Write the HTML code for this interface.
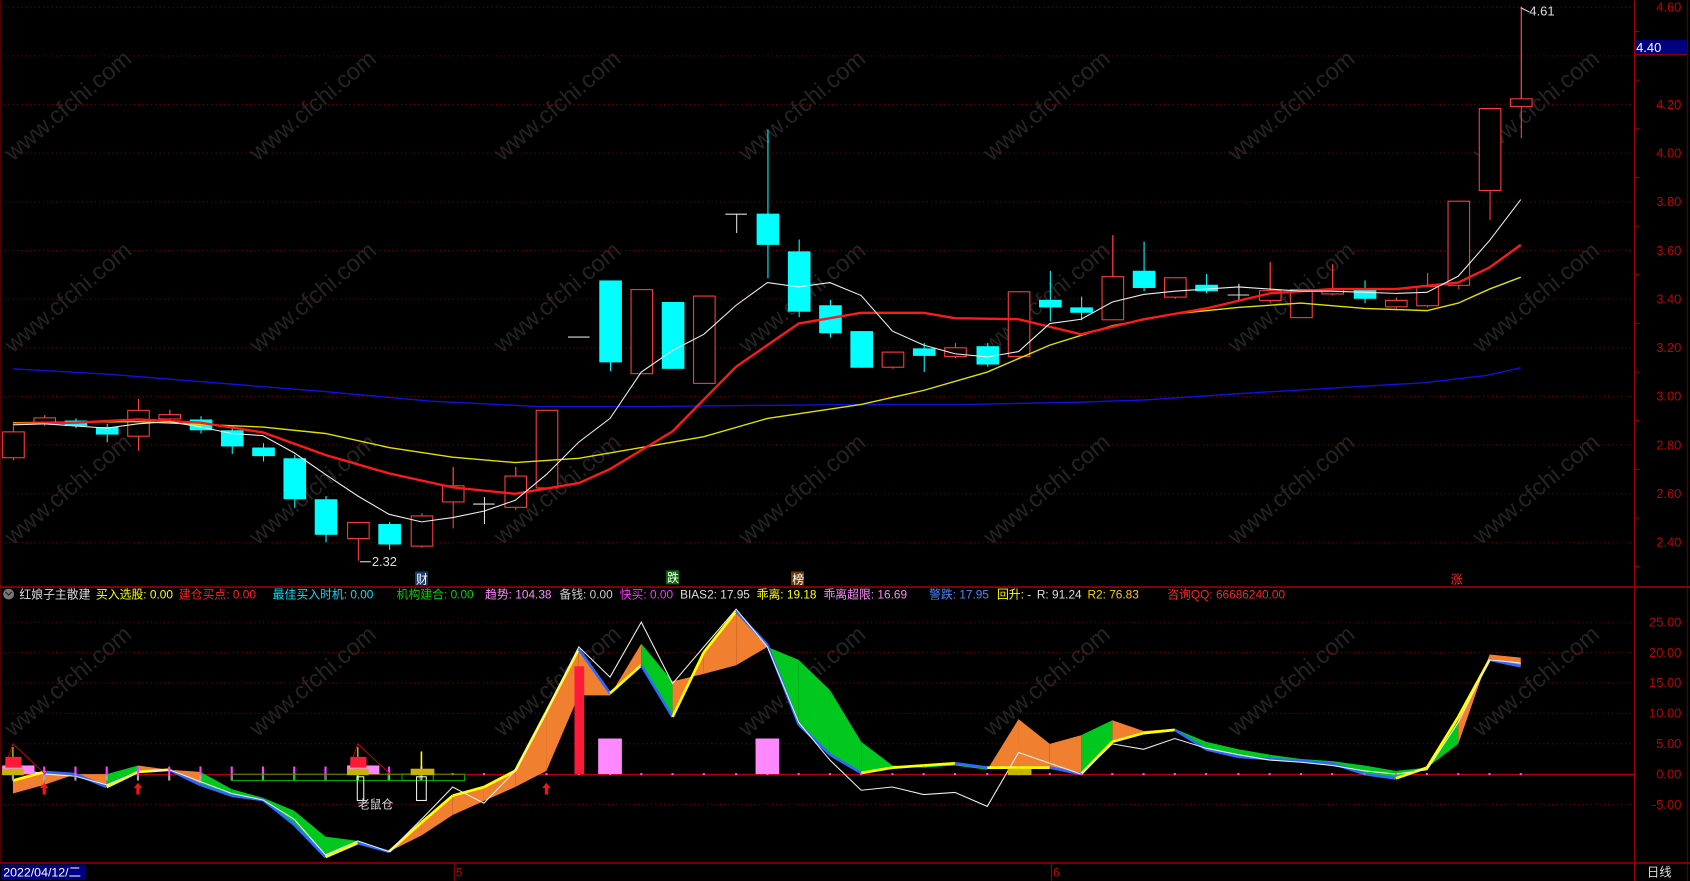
<!DOCTYPE html>
<html><head><meta charset="utf-8"><style>
html,body{margin:0;padding:0;background:#000;width:1690px;height:881px;overflow:hidden}
svg{display:block}
text{font-family:"Liberation Sans","Noto Sans CJK SC",sans-serif}
</style></head><body>
<svg id="s" width="1690" height="881" viewBox="0 0 1568 817" xmlns="http://www.w3.org/2000/svg" overflow="hidden">
<rect width="1568" height="817" fill="#000"/>
<g id="wm" fill="#242424" font-size="22"></g>
<g id="grid"></g>
<g id="main"></g>
<g id="low"></g>
<line x1="1516.5" y1="0" x2="1516.5" y2="817" stroke="#a00000"/>
<line x1="1565.5" y1="0" x2="1565.5" y2="817" stroke="#600000"/>
<line x1="0.5" y1="0" x2="0.5" y2="800" stroke="#500000"/>
<line x1="0" y1="544.5" x2="1568" y2="544.5" stroke="#a00000" stroke-width="1.5"/>
<line x1="0" y1="800.5" x2="1568" y2="800.5" stroke="#a00000" stroke-width="1.5"/>
<rect x="1517" y="37" width="48" height="13" fill="#000080"/>
<line x1="1517" y1="50.5" x2="1565" y2="50.5" stroke="#a00000"/>
<text x="1518" y="48" fill="#fff" font-size="12">4.40</text>
<text x="1419" y="14" fill="#ddd" font-size="12">4.61</text>
<path d="M1411 7 l8 4" stroke="#ddd" fill="none"/>
<text x="345" y="525" fill="#ddd" font-size="12">2.32</text>
<path d="M334 521 h10" stroke="#ddd"/>
<rect x="385" y="530" width="12" height="13" fill="#1a3a6a"/><text x="386" y="541" fill="#fff" font-size="11">财</text>
<rect x="618" y="529" width="12" height="13" fill="#0a6a0a"/><text x="619" y="540" fill="#fff" font-size="11">跌</text>
<rect x="734" y="530" width="12" height="13" fill="#6a3a0a"/><text x="735" y="541" fill="#fff" font-size="11">榜</text>
<text x="1346" y="541" fill="#ff3030" font-size="11">涨</text>
<g font-size="11">
<circle cx="8" cy="551" r="5" fill="#777"/><path d="M5 549 l3 3 l3 -3" stroke="#222" fill="none"/>
<text x="18" y="555" fill="#ddd">红娘子主散建</text>
<text x="89" y="555" fill="#ffff00">买入选股: 0.00</text>
<text x="166" y="555" fill="#ff2020">建仓买点: 0.00</text>
<text x="253" y="555" fill="#00e0ff">最佳买入时机: 0.00</text>
<text x="368" y="555" fill="#00d000">机构建合: 0.00</text>
<text x="450" y="555" fill="#ff88ff">趋势: 104.38</text>
<text x="519" y="555" fill="#ccc">备钱: 0.00</text>
<text x="575" y="555" fill="#ff30ff">快买: 0.00</text>
<text x="631" y="555" fill="#ddd">BIAS2: 17.95</text>
<text x="702" y="555" fill="#ffff00">乖离: 19.18</text>
<text x="764" y="555" fill="#ff88ff">乖离超限: 16.69</text>
<text x="862" y="555" fill="#4488ff">警跌: 17.95</text>
<text x="925" y="555" fill="#ffff00">回升: -</text>
<text x="962" y="555" fill="#ddd">R: 91.24</text>
<text x="1009" y="555" fill="#ffcc00">R2: 76.83</text>
<text x="1083" y="555" fill="#ff2020">咨询QQ: 66686240.00</text>
</g>
<rect x="1" y="802" width="79" height="14" fill="#000080"/>
<text x="3" y="813" fill="#fff" font-size="11.5">2022/04/12/二</text>
<line x1="421.5" y1="801" x2="421.5" y2="817" stroke="#a00000"/>
<text x="423" y="813" fill="#c00" font-size="11">5</text>
<line x1="975.5" y1="801" x2="975.5" y2="817" stroke="#a00000"/>
<text x="977" y="813" fill="#c00" font-size="11">6</text>
<text x="1528" y="813" fill="#ddd" font-size="11.5">日线</text>
<text x="332" y="750" fill="#ddd" font-size="11">老鼠仓</text>
</svg>
<script>
var NS="http://www.w3.org/2000/svg";
function el(p,t,a){var e=document.createElementNS(NS,t);for(var k in a)e.setAttribute(k,a[k]);p.appendChild(e);return e;}
var G=document.getElementById('grid'),M=document.getElementById('main'),L=document.getElementById('low'),W=document.getElementById('wm');
for(var j=0;j<4;j++)for(var i=0;i<7;i++){var x=12+227*i,y=150+178*j;var t=el(W,'text',{x:x,y:y,transform:'rotate(-40 '+x+' '+y+')'});t.textContent='www.cfchi.com';}
function py(p){return 6.5+(4.6-p)*225.7;}
for(var p=2.4;p<=4.61;p+=0.2){var y=py(p);el(G,'line',{x1:0,y1:y,x2:1516,y2:y,stroke:'#7a0000','stroke-dasharray':'1 3'});
if(Math.abs(p-4.4)>0.01){var t=el(G,'text',{x:1560,y:y+4,fill:'#c00000','font-size':12,'text-anchor':'end'});t.textContent=p.toFixed(2);}
if(y+22.5<544)el(G,'line',{x1:1516,y1:y+22.5,x2:1521,y2:y+22.5,stroke:'#a00000'});}
function vy(v){return 718-v*5.64;}
for(var v=-5;v<=25;v+=5){var y=vy(v);if(v!=0)el(G,'line',{x1:0,y1:y,x2:1516,y2:y,stroke:'#7a0000','stroke-dasharray':'1 3'});
var t=el(G,'text',{x:1560,y:y+4,fill:'#c00000','font-size':12,'text-anchor':'end'});t.textContent=v.toFixed(2);}
var C=[[12,400,424,395,427,'r'],[41,387,392,385,395,'r'],[70,390,395,388,397,'c'],[99,396,403,393,410,'c'],[128,380,404,370,418,'r'],[157,384,388,380,390,'r'],[186,389,399,386,402,'c'],[215,399,414,396,421,'c'],[244,415,423,411,428,'c'],[273,425,463,422,471,'c'],[302,463,496,460,503,'c'],[332,484,499,484,520,'r'],[361,486,505,484,510,'c'],[391,478,506,476,508,'r'],[420,450,465,433,490,'r'],[449,467,467,461,486,'w'],[478,441,470,433,473,'r'],[507,380,452,380,452,'r'],[537,312,312,312,312,'w'],[566,260,336,260,344,'c'],[595,268,346,268,346,'r'],[624,280,342,280,342,'c'],[653,274,355,274,355,'r'],[683,198,198,198,216,'w'],[712,198,227,120,258,'c'],[741,233,289,222,294,'c'],[770,283,309,278,313,'c'],[799,307,341,307,341,'c'],[828,326,340,326,342,'r'],[857,323,330,318,345,'c'],[886,322,330,318,332,'r'],[916,321,338,318,340,'c'],[945,270,330,270,332,'r'],[974,278,285,251,298,'c'],[1003,285,290,275,297,'c'],[1032,256,296,218,296,'r'],[1061,251,267,224,270,'c'],[1090,257,275,257,277,'r'],[1119,264,270,254,272,'c'],[1149,273,273,263,279,'w'],[1178,269,278,243,281,'r'],[1207,268,294,268,294,'r'],[1236,268,272,245,274,'r'],[1266,268,277,260,281,'c'],[1295,278,284,276,286,'r'],[1324,265,283,253,285,'r'],[1353,186,264,186,268,'r'],[1382,100,176,100,204,'r'],[1411,91,98,6,128,'r']];
C.forEach(function(c){var col=c[5]=='c'?'#00ffff':c[5]=='r'?'#ff3c3c':'#ddd';
el(M,'line',{x1:c[0]+.5,y1:c[3],x2:c[0]+.5,y2:c[4],stroke:col});
if(c[5]=='w'){el(M,'line',{x1:c[0]-10,y1:c[1]+.5,x2:c[0]+10,y2:c[1]+.5,stroke:col});}
else if(c[5]=='c'){el(M,'rect',{x:c[0]-10,y:c[1],width:21,height:Math.max(1,c[2]-c[1]),fill:col});}
else{el(M,'rect',{x:c[0]-9.5,y:c[1]+.5,width:20,height:Math.max(1,c[2]-c[1]),fill:'#000',stroke:col});el(M,'line',{x1:c[0]+.5,y1:c[3],x2:c[0]+.5,y2:c[1],stroke:col});}
});
function pl(p,pts,col,w){el(p,'polyline',{points:pts.map(function(a){return a.join(',')}).join(' '),fill:'none',stroke:col,'stroke-width':w});}
pl(M,[[12,342],[100,347],[200,355],[300,363],[400,372],[500,377],[600,377],[700,376],[800,375],[900,375],[1000,373],[1060,371],[1150,365],[1250,359],[1320,355],[1380,348],[1411,341]],'#1010e0',1.3);
pl(M,[[12,392],[128,391],[244,396],[302,402],[361,415],[420,424],[478,429],[537,425],[595,415],[653,405],[712,388],[799,375],[857,362],[916,345],[974,320],[1032,302],[1090,291],[1149,285],[1207,281],[1266,286],[1324,288],[1353,281],[1382,268],[1411,257]],'#e0e000',1.3);
pl(M,[[12,393],[70,392],[128,389],[186,392],[244,401],[302,422],[361,439],[420,452],[478,458],[537,448],[566,435],[624,400],[683,340],[741,300],[799,290],[857,290],[886,295],[945,296],[1003,310],[1061,296],[1119,286],[1178,272],[1236,268],[1295,268],[1353,262],[1382,248],[1411,227]],'#ff1a1a',2.2);
pl(M,[[12,394],[41,393],[70,395],[99,397],[128,393],[157,391],[186,396],[215,402],[244,404],[273,420],[302,440],[332,460],[361,477],[391,484],[420,480],[449,474],[478,464],[507,440],[537,410],[566,388],[595,345],[624,325],[653,310],[683,283],[712,262],[741,266],[770,262],[799,274],[828,307],[857,320],[886,328],[916,331],[945,326],[974,300],[1003,296],[1032,280],[1061,273],[1090,270],[1119,268],[1149,266],[1178,268],[1207,270],[1236,270],[1266,271],[1295,272],[1324,271],[1353,256],[1382,223],[1411,185]],'#eee',1);
var X=[12,41,70,99,128,157,186,215,244,273,302,332,361,391,420,449,478,507,537,566,595,624,653,683,712,741,770,799,828,857,886,916,945,974,1003,1032,1061,1090,1119,1149,1178,1207,1236,1266,1295,1324,1353,1382,1411];
var P=[736,728,718,718,710,714,716,732,740,752,776,780,790,775,756,743,730,715,645,645,597,632,625,617,600,612,640,688,710,712,710,714,667,690,682,668,678,676,688,695,700,704,706,710,715,712,690,607,610];
var Q=[724,716,718,730,716,714,728,738,742,765,795,782,790,763,738,730,715,660,602,643,617,665,605,567,598,672,700,717,712,710,708,712,712,712,718,688,680,677,695,702,704,706,708,718,722,712,665,612,618];
var Wt=[712,718,720,728,716,714,725,736,742,760,793,780,790,760,730,745,715,660,600,628,577,634,600,565,600,670,705,733,730,737,735,748,698,708,718,690,695,685,694,700,705,707,710,715,718,714,670,612,615];
var F="ooogooggggggoooooooogooogggggggooogoogggggggggooo";
el(L,'line',{x1:0,y1:718.5,x2:1516,y2:718.5,stroke:'#d00000'});
for(var i=0;i<X.length-1;i++){
el(L,'polygon',{points:[X[i],P[i],X[i+1],P[i+1],X[i+1],Q[i+1],X[i],Q[i]].join(','),fill:F[i]=='g'?'#00c81e':'#f07f30'});}
for(var i=0;i<X.length-1;i++){var fall=Q[i+1]>Q[i];
el(L,'line',{x1:X[i],y1:Q[i],x2:X[i+1],y2:Q[i+1],stroke:fall?'#2a6aff':'#ffff00','stroke-width':2.5});}
pl(L,X.map(function(x,i){return [x,Wt[i]]}),'#eee',1);
X.forEach(function(x,i){if(i<14){el(L,'rect',{x:x-1,y:711,width:2,height:8,fill:'#ff40ff'});el(L,'rect',{x:x-1,y:719,width:2,height:5,fill:'#aaa'});}else el(L,'rect',{x:x-1,y:717,width:2,height:2,fill:'#ff40ff'});});
[[215,380],[373,407]].forEach(function(s){for(var x=s[0];x<s[1];x+=29)el(L,'rect',{x:x,y:718,width:29,height:6,fill:'none',stroke:'#00c000','stroke-width':.8});});
el(L,'rect',{x:533,y:618,width:9,height:100,fill:'#ff1a3a'});
el(L,'rect',{x:555,y:685,width:22,height:33,fill:'#ff88ff'});
el(L,'rect',{x:701,y:685,width:22,height:33,fill:'#ff88ff'});
[[12],[332]].forEach(function(a){var x=a[0];el(L,'path',{d:'M'+(x-10)+' 718 L'+x+' 690 L'+(x+30)+' 718',fill:'none',stroke:'#e00000','stroke-width':.8});
el(L,'rect',{x:x-10,y:710,width:30,height:8,fill:'#ff88ff'});el(L,'rect',{x:x-7,y:702,width:15,height:10,fill:'#ff1a3a'});
el(L,'rect',{x:x-10,y:713,width:20,height:6,fill:'#c8b400'});el(L,'line',{x1:x,y1:693,x2:x,y2:702,stroke:'#ff0'});});
el(L,'rect',{x:381,y:713,width:22,height:6,fill:'#c8b400'});el(L,'line',{x1:391,y1:697,x2:391,y2:713,stroke:'#ff0','stroke-width':1.5});
el(L,'rect',{x:386.5,y:720.5,width:9,height:22,fill:'none',stroke:'#eee'});
el(L,'rect',{x:331.5,y:720.5,width:6,height:22,fill:'none',stroke:'#eee'});
el(L,'rect',{x:935,y:713,width:22,height:6,fill:'#c8b400'});
[41,128,507].forEach(function(x){el(L,'path',{d:'M'+(x-4)+' 731 L'+x+' 726 L'+(x+4)+' 731 H'+(x+1.5)+' V737 H'+(x-1.5)+' V731Z',fill:'#ff1010'});});
</script>
</body></html>
